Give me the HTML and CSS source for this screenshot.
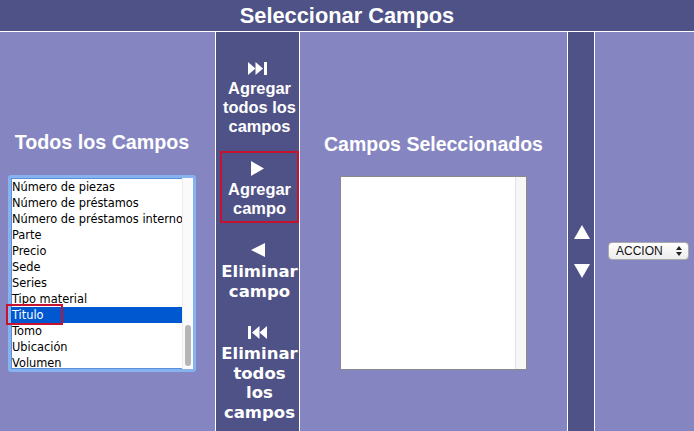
FILE: index.html
```html
<!DOCTYPE html>
<html lang="es">
<head>
<meta charset="utf-8">
<title>Seleccionar Campos</title>
<link rel="stylesheet" href="styles.css">
</head>
<body>
<div class="layout">
  <div class="header">Seleccionar Campos</div>

  <div class="col col-all">
    <div class="heading heading-all">Todos los Campos</div>
    <div class="listwrap">
      <div class="listbox">
        <div class="rows">
          <div class="row">Número de piezas</div>
          <div class="row">Número de préstamos</div>
          <div class="row">Número de préstamos internos</div>
          <div class="row">Parte</div>
          <div class="row">Precio</div>
          <div class="row">Sede</div>
          <div class="row">Series</div>
          <div class="row">Tipo material</div>
          <div class="row selected">Titulo</div>
          <div class="row">Tomo</div>
          <div class="row">Ubicación</div>
          <div class="row">Volumen</div>
        </div>
        <div class="scrolltrack"><div class="thumb"></div></div>
      </div>
      <div class="mark mark-row"></div>
    </div>
  </div>

  <div class="col col-buttons">
    <div class="btn btn-add">
      <svg class="ico" width="19" height="13" viewBox="0 0 19 13"><polygon points="0,0 7.5,6.5 0,13" fill="#fff"/><polygon points="7.5,0 15,6.5 7.5,13" fill="#fff"/><rect x="16" y="0" width="3" height="13" fill="#fff"/></svg>
      <div class="label">Agregar todos los campos</div>
    </div>
    <div class="btn btn-add marked">
      <svg class="ico" width="13" height="15" viewBox="0 0 13 15"><polygon points="0,0 13,7.5 0,15" fill="#fff"/></svg>
      <div class="label">Agregar campo</div>
    </div>
    <div class="btn btn-del">
      <svg class="ico" width="14" height="14" viewBox="0 0 14 14"><polygon points="14,0 0,7 14,14" fill="#fff"/></svg>
      <div class="label">Eliminar campo</div>
    </div>
    <div class="btn btn-del">
      <svg class="ico" width="19" height="13" viewBox="0 0 19 13"><rect x="0" y="0" width="3" height="13" fill="#fff"/><polygon points="11.5,0 4,6.5 11.5,13" fill="#fff"/><polygon points="19,0 11.5,6.5 19,13" fill="#fff"/></svg>
      <div class="label">Eliminar todos los campos</div>
    </div>
  </div>

  <div class="col col-sel">
    <div class="heading heading-sel">Campos Seleccionados</div>
    <div class="selbox">
      <div class="selcontent"></div>
      <div class="seltrack"></div>
    </div>
  </div>

  <div class="col col-order">
    <svg class="arrow" width="16" height="14" viewBox="0 0 16 14"><polygon points="8,0 16,14 0,14" fill="#fff"/></svg>
    <svg class="arrow arrow-down" width="16" height="14" viewBox="0 0 16 14"><polygon points="0,0 16,0 8,14" fill="#fff"/></svg>
  </div>

  <div class="col col-action">
    <div class="select">
      <span class="select-text">ACCION</span>
      <svg class="select-arrows" width="6" height="10" viewBox="0 0 6 10"><polygon points="3,0 6,4 0,4" fill="#222"/><polygon points="0,6 6,6 3,10" fill="#222"/></svg>
    </div>
  </div>
</div>
</body>
</html>
```
FILE: styles.css
```css
html, body {
  margin: 0;
  padding: 0;
  overflow: hidden;
  background: #ffffff;
}

.layout {
  display: grid;
  grid-template-columns: 215px 83px 267px 26px 99px;
  grid-template-rows: 31px 440px;
  column-gap: 1px;
  row-gap: 1px;
  background: #ffffff;
  width: 694px;
  font-family: "Liberation Sans", Arial, sans-serif;
  color: #ffffff;
}

.header {
  grid-column: 1 / -1;
  background: #4f5286;
  text-align: center;
  font-weight: bold;
  font-size: 21.8px;
  line-height: 31px;
}

.col {
  background: #8586c1;
}

.col-buttons,
.col-order {
  background: #4f5286;
}

/* left column */
.col-all {
  padding: 99px 0 0 8px;
}

.heading {
  font-weight: bold;
  line-height: 22px;
  text-align: center;
  white-space: nowrap;
}

.heading-all {
  width: 188px;
  font-size: 19.7px;
  margin-bottom: 22px;
}

.listwrap {
  position: relative;
  width: 188px;
}

.listbox {
  position: relative;
  width: 188px;
  height: 197px;
  box-sizing: border-box;
  border: 3px solid #86b2ef;
  border-radius: 3px;
  background: #ffffff;
  box-shadow: inset 0 0 0 1px #5a8fdc;
  overflow: hidden;
  display: flex;
}

.rows {
  width: 172px;
  padding-top: 1px;
  overflow: hidden;
  color: #000000;
  font-family: "DejaVu Sans", Verdana, sans-serif;
  font-size: 11.4px;
}

.row {
  height: 16px;
  line-height: 16px;
  padding-left: 1px;
  white-space: nowrap;
  overflow: hidden;
}

.row.selected {
  background: #0058d0;
  color: #ffffff;
}

.scrolltrack {
  position: relative;
  width: 10px;
  background: #fafafa;
  border-left: 1px solid #ececec;
}

.thumb {
  position: absolute;
  left: 2px;
  top: 147px;
  width: 6px;
  height: 41px;
  border-radius: 3px;
  background: #b6b6b6;
}

.mark {
  position: absolute;
  box-sizing: border-box;
  border: 2px solid #c4122f;
}

.mark-row {
  left: -2px;
  top: 129px;
  width: 57px;
  height: 21px;
}

/* middle buttons */
.col-buttons {
  padding-top: 20px;
  display: flex;
  flex-direction: column;
}

.btn {
  margin: 0 0 10px 4px;
  padding: 8px 0 3px;
  border: 2px solid transparent;
  text-align: center;
  font-weight: bold;
  font-size: 16.4px;
  line-height: 19px;
}

.btn.marked {
  border-color: #c4122f;
}

.ico {
  display: block;
  margin: 0 auto;
  position: relative;
  left: -2px;
}

.btn-add .ico {
  margin-bottom: 4px;
}

.btn-del .ico {
  margin-bottom: 5px;
}

.btn-add .label {
  font-family: "Liberation Sans", Arial, sans-serif;
}

.btn-del .label {
  font-family: "DejaVu Sans", Verdana, sans-serif;
  font-size: 16.5px;
  line-height: 19.5px;
  margin: 0 -2px;
}

/* selected fields */
.col-sel {
  padding-top: 101px;
  display: flex;
  flex-direction: column;
  align-items: center;
}

.heading-sel {
  font-size: 19.5px;
  margin-bottom: 21px;
}

.selbox {
  width: 187px;
  height: 194px;
  box-sizing: border-box;
  border: 1px solid #8a8a8a;
  background: #ffffff;
  display: flex;
}

.selcontent {
  flex: 1;
}

.seltrack {
  width: 10px;
  background: #f7f7f7;
  border-left: 1px solid #e2e2e2;
}

/* order arrows */
.col-order {
  padding-top: 193px;
  display: flex;
  flex-direction: column;
  align-items: center;
}

.arrow {
  display: block;
  position: relative;
  left: 1px;
}

.arrow-down {
  margin-top: 25px;
}

/* action select */
.col-action {
  padding: 210px 0 0 13px;
}

.select {
  width: 81px;
  height: 18px;
  box-sizing: border-box;
  border: 1px solid #ababab;
  border-radius: 4px;
  background: linear-gradient(#ffffff, #ececec);
  display: flex;
  align-items: center;
  justify-content: space-between;
  padding: 0 6px 0 7px;
  color: #111111;
  font-size: 12px;
}

.select-text {
  line-height: 16px;
}

.select-arrows {
  display: block;
}
```
